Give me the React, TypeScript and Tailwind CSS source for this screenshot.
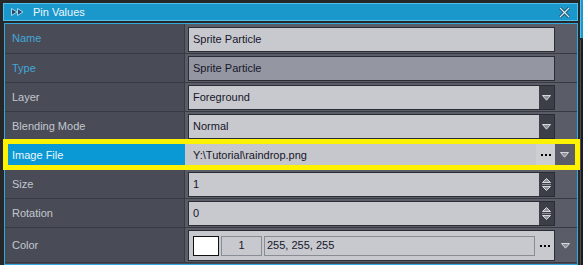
import React from "react";

const font = { fontFamily: '"Liberation Sans", Arial, sans-serif' };

function DownTri() {
  return (
    <svg width="9" height="6" viewBox="0 0 9 6">
      <path d="M0.5 0.5H8.5L4.5 5.2Z" fill="#8f929b" stroke="#d6d8dd" strokeWidth="1" />
    </svg>
  );
}

function Dots() {
  return (
    <div className="flex gap-[2px]">
      <span className="w-[2px] h-[2px] bg-black" />
      <span className="w-[2px] h-[2px] bg-black" />
      <span className="w-[2px] h-[2px] bg-black" />
    </div>
  );
}

function Spinner() {
  return (
    <div className="w-[15px] h-full bg-[#3c3f47] flex flex-col items-center justify-center gap-[1px]">
      <svg width="9" height="5" viewBox="0 0 9 5">
        <path d="M0.5 4.5H8.5L4.5 0.5Z" fill="#8f929b" stroke="#d6d8dd" strokeWidth="1" />
      </svg>
      <span className="w-[9px] h-[1px] bg-[#8f929b]" />
      <svg width="9" height="5" viewBox="0 0 9 5">
        <path d="M0.5 0.5H8.5L4.5 4.5Z" fill="#8f929b" stroke="#d6d8dd" strokeWidth="1" />
      </svg>
    </div>
  );
}

function Row({
  label,
  blue,
  h = "h-[29px]",
  pt = "pt-[2px]",
  children,
}: {
  label: string;
  blue?: boolean;
  h?: string;
  pt?: string;
  children: React.ReactNode;
}) {
  return (
    <div className={`flex ${h} border-b border-[#383a42]`}>
      <div
        className={`w-[180px] flex items-center pl-[7px] border-r border-[#383a42] ${
          blue ? "text-[#41a7da]" : "text-[#c3c7cf]"
        }`}
      >
        {label}
      </div>
      <div className={`flex-1 bg-[#5a5d68] pl-[3px] ${pt}`}>{children}</div>
    </div>
  );
}

function Field({ text, bg = "bg-[#c8c9ce]" }: { text: string; bg?: string }) {
  return (
    <div className={`w-[367px] h-[25px] border border-[#2b2d34] ${bg} flex items-center pl-[4px] text-[#16162a]`}>
      {text}
    </div>
  );
}

function Select({ text, button }: { text: string; button: React.ReactNode }) {
  return (
    <div className="w-[367px] h-[25px] border border-[#2b2d34] bg-[#c8c9ce] flex items-center text-[#16162a]">
      <div className="flex-1 pl-[4px]">{text}</div>
      {button}
    </div>
  );
}

function DropButton() {
  return (
    <div className="w-[15px] h-full bg-[#3c3f47] flex items-center justify-center">
      <DownTri />
    </div>
  );
}

export default function App() {
  return (
    <div className="relative w-[583px] h-[265px] overflow-hidden bg-[#262729] flex text-[11px]" style={font}>
      <div className="flex flex-col w-[575px] ml-[3px] pt-[3px]">
        {/* Title bar */}
        <div className="h-[18px] bg-[#1a97cb] border border-[#55bfea] flex items-center pl-[7px] pr-[6px] text-[#eaf6fc]">
          <svg width="14" height="8" viewBox="0 0 14 8" className="mr-[8px]">
            <path d="M0.5 0.5L6 4L0.5 7.5Z" fill="#2a4b63" stroke="#a4d9f1" strokeWidth="1" />
            <path d="M6.5 0.5L12 4L6.5 7.5Z" fill="#2a4b63" stroke="#a4d9f1" strokeWidth="1" />
          </svg>
          <span>Pin Values</span>
          <div className="flex-1" />
          <svg width="11" height="11" viewBox="0 0 11 11" className="mr-[1px]">
            <path d="M1 1L10 10M10 1L1 10" stroke="#1d4a66" strokeWidth="3" />
            <path d="M1 1L10 10M10 1L1 10" stroke="#d8eef8" strokeWidth="1.2" />
          </svg>
        </div>

        {/* Body */}
        <div className="mt-[2px] ml-[1px] flex-1 border border-[#33a8dc] bg-[#494c56] flex flex-col">
          <Row label="Name" blue h="h-[30px]" pt="pt-[3px]">
            <Field text="Sprite Particle" />
          </Row>
          <Row label="Type" blue>
            <Field text="Sprite Particle" bg="bg-[#9497a1]" />
          </Row>
          <Row label="Layer">
            <Select text="Foreground" button={<DropButton />} />
          </Row>
          <Row label="Blending Mode">
            <Select text="Normal" button={<DropButton />} />
          </Row>

          {/* Selected row */}
          <div className="flex h-[29px] border-b border-[#383a42]">
            <div className="w-[180px] flex items-center pl-[7px] bg-[#0a99d5] text-[#eef6fb]">Image File</div>
            <div className="flex-1 flex bg-[#5a5d68]">
              <div className="w-[370px] bg-[#c6c7cc] flex items-center pl-[8px] text-[#16162a]">
                <div className="flex-1">Y:\Tutorial\raindrop.png</div>
                <div className="w-[19px] h-full bg-[#cdced2] flex items-center justify-center">
                  <Dots />
                </div>
              </div>
              <div className="flex-1 flex items-center justify-center pr-[3px]">
                <DownTri />
              </div>
            </div>
          </div>

          <Row label="Size">
            <Select text="1" button={<Spinner />} />
          </Row>
          <Row label="Rotation">
            <Select text="0" button={<Spinner />} />
          </Row>
          <Row label="Color" h="h-[35px]">
            <div className="flex items-center">
              <div className="w-[367px] h-[31px] border border-[#2b2d34] bg-[#c8c9ce] flex items-center pl-[4px] text-[#16162a]">
                <div className="w-[26px] h-[20px] bg-white border border-[#111]" />
                <div className="w-[41px] h-[20px] ml-[2px] border border-[#8a8c93] flex items-center justify-center">1</div>
                <div className="w-[271px] h-[20px] ml-[2px] border border-[#8a8c93] flex items-center pl-[2px]">
                  255, 255, 255
                </div>
                <div className="flex-1 flex justify-center">
                  <Dots />
                </div>
              </div>
              <div className="w-[21px] flex justify-center">
                <DownTri />
              </div>
            </div>
          </Row>
          <div className="flex-1" />
        </div>
      </div>

      {/* Right edge strip */}
      <div className="ml-[2px] w-[3px] flex flex-col">
        <div className="h-[38px] bg-[#1a97cb] border-l border-[#55bfea]" />
        <div className="mt-[2px] flex-1 bg-[#1c1d1f] border-l border-[#4a4c52]" />
      </div>

      {/* Highlight frame */}
      <div className="absolute left-[3px] top-[139px] w-[577px] h-[31px] border-[5px] border-[#fff200] pointer-events-none" />
    </div>
  );
}
